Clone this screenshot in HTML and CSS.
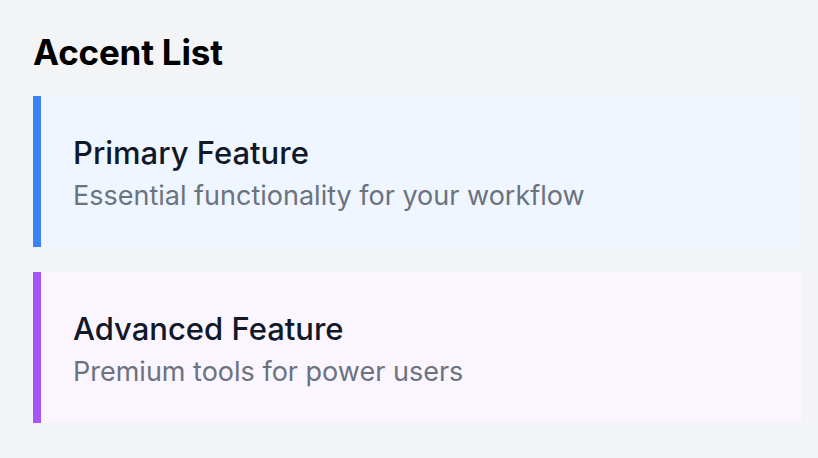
FILE: index.html
```html
<!DOCTYPE html>
<html>
<head>
<meta charset="utf-8">
<link rel="stylesheet" href="styles.css">
</head>
<body>
<div class="page">
  <h1 class="heading">Accent List</h1>
  <div class="list">
    <div class="item item-blue">
      <div class="item-title">Primary Feature</div>
      <div class="item-desc">Essential functionality for your workflow</div>
    </div>
    <div class="item item-purple">
      <div class="item-title">Advanced Feature</div>
      <div class="item-desc">Premium tools for power users</div>
    </div>
  </div>
</div>
</body>
</html>
```
FILE: styles.css
```css
html, body {
  margin: 0;
  padding: 0;
  background: #f3f4f6;
}
body {
  font-family: Inter, "Noto Sans", sans-serif;
  width: 818px;
  height: 458px;
  overflow: hidden;
}
.page {
  padding: 32px 17px 0 33px;
}
.heading {
  margin: 0 0 24px 0;
  font-size: 35px;
  line-height: 40px;
  font-weight: 700;
  color: #000;
  letter-spacing: -0.2px;
}
.list {
  display: flex;
  flex-direction: column;
  gap: 25px;
}
.item {
  border-left: 8px solid;
  padding: 36px 32px 0 32px;
  height: 151px;
  box-sizing: border-box;
}
.item-blue {
  border-left-color: #3b82f6;
  background: #eff6ff;
}
.item-purple {
  border-left-color: #a855f7;
  background: #faf5ff;
}
.item-title {
  font-size: 31px;
  line-height: 42px;
  font-weight: 500;
  color: #111827;
}
.item-desc {
  font-size: 27px;
  line-height: 44px;
  color: #6b7280;
}
```
